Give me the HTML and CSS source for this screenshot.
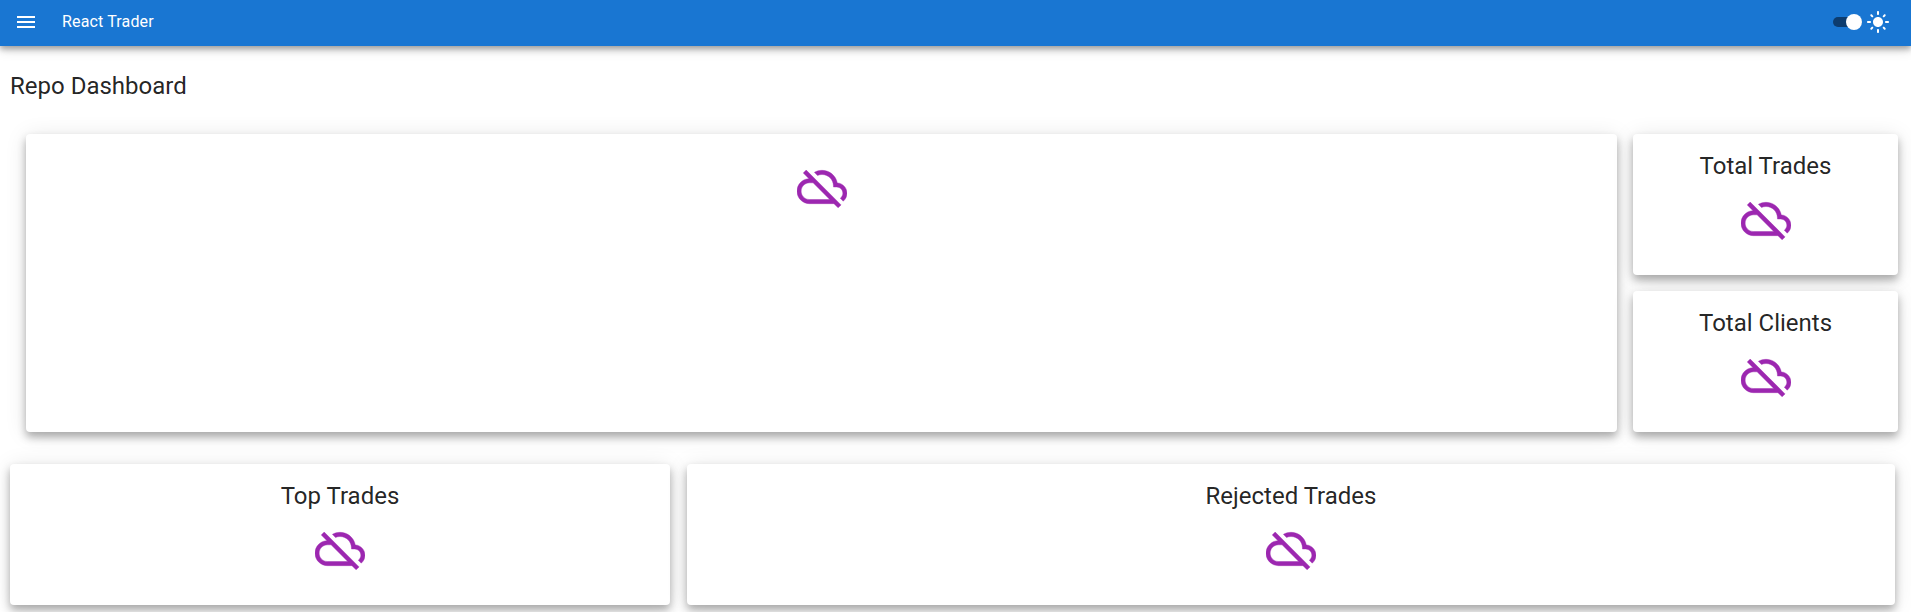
FILE: index.html
```html
<!DOCTYPE html>
<html lang="en">
<head>
    <meta charset="UTF-8">
    <meta name="viewport" content="width=device-width, initial-scale=1.0">
    <title>React Trader</title>
    <link rel="stylesheet" href="styles.css">
</head>
<body>

<svg class="icon-defs" width="0" height="0" aria-hidden="true">
    <symbol id="cloud-off" viewBox="0 0 24 24">
        <path d="M24 15c0-2.64-2.05-4.78-4.65-4.96C18.67 6.59 15.64 4 12 4c-1.33 0-2.57.36-3.65.97l1.49 1.49C10.51 6.17 11.23 6 12 6c3.04 0 5.5 2.46 5.5 5.5v.5H19c1.66 0 3 1.34 3 3 0 .99-.48 1.85-1.21 2.4l1.41 1.41c1.09-.92 1.8-2.27 1.8-3.81zM4.41 3.86 3 5.27l2.77 2.77h-.42C2.34 8.36 0 10.91 0 14c0 3.31 2.69 6 6 6h11.73l2 2 1.41-1.41L4.41 3.86zM6 18c-2.21 0-4-1.79-4-4s1.79-4 4-4h1.73l8 8H6z"/>
    </symbol>
</svg>

<header class="app-bar">
    <svg class="menu-icon" viewBox="0 0 24 24"><path d="M3 18h18v-2H3v2zm0-5h18v-2H3v2zm0-7v2h18V6H3z"/></svg>
    <span class="app-title">React Trader</span>
    <div class="theme-toggle">
        <div class="switch"><span class="switch-thumb"></span></div>
        <svg class="sun-icon" viewBox="0 0 24 24"><path d="M12 7c-2.76 0-5 2.24-5 5s2.24 5 5 5 5-2.24 5-5-2.24-5-5-5zM2 13h2c.55 0 1-.45 1-1s-.45-1-1-1H2c-.55 0-1 .45-1 1s.45 1 1 1zm18 0h2c.55 0 1-.45 1-1s-.45-1-1-1h-2c-.55 0-1 .45-1 1s.45 1 1 1zM11 2v2c0 .55.45 1 1 1s1-.45 1-1V2c0-.55-.45-1-1-1s-1 .45-1 1zm0 18v2c0 .55.45 1 1 1s1-.45 1-1v-2c0-.55-.45-1-1-1s-1 .45-1 1zM5.99 4.58c-.39-.39-1.03-.39-1.41 0-.39.39-.39 1.03 0 1.41l1.06 1.06c.39.39 1.03.39 1.41 0s.39-1.03 0-1.41L5.99 4.58zm12.37 12.37c-.39-.39-1.03-.39-1.41 0-.39.39-.39 1.03 0 1.41l1.06 1.06c.39.39 1.03.39 1.41 0 .39-.39.39-1.03 0-1.41l-1.06-1.06zm1.06-10.96c.39-.39.39-1.03 0-1.41-.39-.39-1.03-.39-1.41 0l-1.06 1.06c-.39.39-.39 1.03 0 1.41s1.03.39 1.41 0l1.06-1.06zM7.05 18.36c.39-.39.39-1.03 0-1.41-.39-.39-1.03-.39-1.41 0l-1.06 1.06c-.39.39-.39 1.03 0 1.41s1.03.39 1.41 0l1.06-1.06z"/></svg>
    </div>
</header>

<main class="dashboard">
    <h1 class="page-title">Repo Dashboard</h1>

    <div class="top-row">
        <section class="card card-chart">
            <svg class="cloud-icon"><use href="#cloud-off"/></svg>
        </section>
        <div class="stat-column">
            <section class="card">
                <h2 class="card-title">Total Trades</h2>
                <svg class="cloud-icon"><use href="#cloud-off"/></svg>
            </section>
            <section class="card">
                <h2 class="card-title">Total Clients</h2>
                <svg class="cloud-icon"><use href="#cloud-off"/></svg>
            </section>
        </div>
    </div>

    <div class="bottom-row">
        <section class="card card-top">
            <h2 class="card-title">Top Trades</h2>
            <svg class="cloud-icon"><use href="#cloud-off"/></svg>
        </section>
        <section class="card card-rejected">
            <h2 class="card-title">Rejected Trades</h2>
            <svg class="cloud-icon"><use href="#cloud-off"/></svg>
        </section>
    </div>
</main>

</body>
</html>
```

FILE: styles.css
```css
:root {
    --primary-color: #1976d2;
    --accent-color: #9c27b0;
    --text-color: rgba(0, 0, 0, 0.87);
}

html, body {
    height: 100%;
    overflow: hidden;
}

body {
    margin: 0;
    background-color: #fff;
    color: var(--text-color);
    font-family: Roboto, sans-serif;
}

.icon-defs {
    display: block;
}

.app-bar {
    display: flex;
    align-items: center;
    height: 46px;
    padding: 0 21px 2px 14px;
    box-sizing: border-box;
    background-color: var(--primary-color);
    color: #fff;
    box-shadow: 0 3px 6px rgba(0, 0, 0, 0.32), 0 4px 12px rgba(0, 0, 0, 0.12);
}

.menu-icon {
    width: 24px;
    height: 24px;
    margin-right: 24px;
    fill: #fff;
}

.app-title {
    font-size: 16px;
    font-weight: 400;
    letter-spacing: 0.15px;
    line-height: 24px;
}

.theme-toggle {
    display: flex;
    align-items: center;
    margin-left: auto;
}

.switch {
    position: relative;
    width: 29px;
    height: 10px;
    margin-right: 4px;
    border-radius: 5px;
    background-color: #0d3c6e;
}

.switch-thumb {
    position: absolute;
    top: -3px;
    right: 0;
    width: 16px;
    height: 16px;
    border-radius: 50%;
    background-color: #fff;
}

.sun-icon {
    width: 24px;
    height: 24px;
    fill: #fff;
}

.dashboard {
    padding: 0 13px 0 10px;
}

.page-title {
    margin: 0;
    padding-top: 27px;
    font-size: 24px;
    font-weight: 400;
    line-height: 26px;
    height: 61px;
}

.top-row {
    display: flex;
    gap: 16px;
    height: 298px;
    padding-left: 16px;
}

.stat-column {
    display: flex;
    flex-direction: column;
    gap: 16px;
    width: 265px;
}

.bottom-row {
    display: flex;
    gap: 17px;
    margin-top: 32px;
    padding-right: 3px;
}

.card {
    display: flex;
    flex-direction: column;
    align-items: center;
    flex: 1;
    box-sizing: border-box;
    padding-top: 17px;
    border-radius: 4px;
    background-color: #fff;
    box-shadow: 0 5px 8px rgba(0, 0, 0, 0.3), 0 2px 22px rgba(0, 0, 0, 0.1);
}

.card-chart {
    padding-top: 28px;
}

.card-top {
    flex: none;
    width: 660px;
    height: 141px;
}

.card-rejected {
    height: 141px;
}

.card-title {
    margin: 0 0 13px;
    font-size: 24px;
    font-weight: 400;
    line-height: 30px;
}

.cloud-icon {
    width: 50px;
    height: 50px;
    fill: var(--accent-color);
    stroke: var(--accent-color);
    stroke-width: 0.2;
}
```
